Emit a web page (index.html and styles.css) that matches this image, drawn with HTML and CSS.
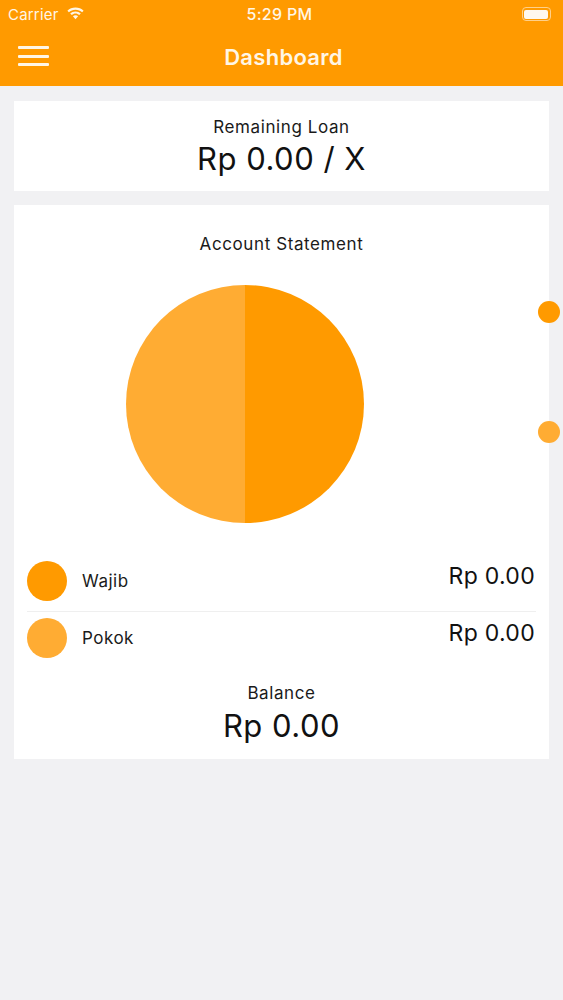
FILE: index.html
```html
<!DOCTYPE html>
<html lang="en">
<head>
<meta charset="utf-8">
<title>Dashboard</title>
<link rel="stylesheet" href="styles.css">
</head>
<body>
<header class="appbar">
  <div class="statusbar">
    <div class="sb-left">
      <span class="carrier">Carrier</span>
      <svg class="wifi" width="17" height="13" viewBox="0 0 17 13" aria-hidden="true">
        <path d="M8.5 0.5C5.3 0.5 2.5 1.7 0.4 3.7L1.9 5.3C3.6 3.7 5.9 2.7 8.5 2.7S13.4 3.7 15.1 5.3L16.6 3.7C14.5 1.7 11.7 0.5 8.5 0.5Z" fill="#fff6e6"/>
        <path d="M8.5 4.4C6.4 4.4 4.6 5.2 3.2 6.5L4.8 8.1C5.8 7.2 7.1 6.6 8.5 6.6S11.2 7.2 12.2 8.1L13.8 6.5C12.4 5.2 10.6 4.4 8.5 4.4Z" fill="#fff6e6"/>
        <path d="M8.5 8.3C7.5 8.3 6.6 8.7 5.9 9.3L8.5 12.2L11.1 9.3C10.4 8.7 9.5 8.3 8.5 8.3Z" fill="#fff6e6"/>
      </svg>
    </div>
    <span class="time">5:29 PM</span>
    <div class="sb-right">
      <span class="battery"><span class="battery-fill"></span></span>
    </div>
  </div>
  <nav class="navbar">
    <button class="menu" aria-label="Menu">
      <span></span><span></span><span></span>
    </button>
    <h1 class="title">Dashboard</h1>
    <span class="nav-spacer"></span>
  </nav>
</header>

<main class="content">
  <section class="card loan">
    <div class="label">Remaining Loan</div>
    <div class="big">Rp 0.00 / X</div>
  </section>

  <section class="card statement">
    <div class="label">Account Statement</div>
    <div class="chart">
      <svg class="pie" width="238" height="238" viewBox="0 0 238 238" aria-hidden="true">
        <path d="M119 0A119 119 0 0 1 119 238Z" fill="#ff9a00"/>
        <path d="M119 238A119 119 0 0 1 119 0Z" fill="#ffac33"/>
      </svg>
    </div>
    <span class="dot dot-a"></span>
    <span class="dot dot-b"></span>

    <ul class="legend">
      <li class="row">
        <span class="swatch wajib"></span>
        <span class="name">Wajib</span>
        <span class="amount">Rp 0.00</span>
      </li>
      <li class="row">
        <span class="swatch pokok"></span>
        <span class="name">Pokok</span>
        <span class="amount">Rp 0.00</span>
      </li>
    </ul>

    <div class="balance">
      <div class="label">Balance</div>
      <div class="big">Rp 0.00</div>
    </div>
  </section>
</main>
</body>
</html>
```
FILE: styles.css
```css
* { box-sizing: border-box; }

html, body {
  margin: 0;
  padding: 0;
}

body {
  width: 563px;
  min-height: 1000px;
  background: #f1f1f3;
  font-family: Inter, "Liberation Sans", sans-serif;
  color: #111;
}

.appbar {
  background: #ff9a00;
  color: #fff6e6;
}

.statusbar {
  height: 28px;
  display: flex;
  align-items: center;
  justify-content: space-between;
  padding: 0 12px 0 8px;
  font-size: 15px;
}

.sb-left {
  display: flex;
  align-items: center;
  gap: 8px;
  width: 100px;
}

.carrier { letter-spacing: 0.2px; }

.wifi { margin-top: -2px; }

.time {
  font-weight: 500;
  font-size: 16px;
  letter-spacing: 0.3px;
}

.sb-right {
  width: 100px;
  display: flex;
  justify-content: flex-end;
}

.battery {
  width: 29px;
  height: 14px;
  border: 1.5px solid #ffd08a;
  border-radius: 4px;
  padding: 1.5px;
  display: flex;
}

.battery-fill {
  flex: 1;
  background: #fff8ee;
  border-radius: 2px;
}

.navbar {
  height: 58px;
  display: flex;
  align-items: center;
  justify-content: space-between;
  padding: 0 14px 0 18px;
}

.menu {
  width: 31px;
  height: 20px;
  padding: 0;
  margin: 0 0 2px 0;
  border: 0;
  background: transparent;
  display: flex;
  flex-direction: column;
  justify-content: space-between;
}

.menu span {
  display: block;
  height: 3px;
  width: 100%;
  background: #fff6e6;
  border-radius: 1px;
}

.title {
  margin: 0 0 1px 0;
  font-size: 22px;
  font-weight: 600;
  letter-spacing: 0.3px;
  color: #fff6e6;
}

.nav-spacer { width: 31px; }

.content {
  padding: 15px 14px;
  display: flex;
  flex-direction: column;
  gap: 14px;
}

.card {
  background: #fff;
  text-align: center;
}

.label {
  font-size: 17px;
  line-height: 20px;
  letter-spacing: 0.6px;
  color: #1a1a1a;
}

.big {
  font-size: 31px;
  line-height: 36px;
  letter-spacing: 0.5px;
  color: #111;
}

.loan {
  padding: 16px 0 14px;
  display: flex;
  flex-direction: column;
  gap: 4px;
}

.statement {
  position: relative;
  padding: 29px 0 15px;
}

.chart {
  padding: 31px 0 0 112px;
  display: flex;
}

.pie { display: block; }

.dot {
  position: absolute;
  right: -11px;
  width: 22px;
  height: 22px;
  border-radius: 50%;
}

.dot-a { top: 96px; background: #ff9a00; }
.dot-b { top: 216px; background: #ffac33; }

.legend {
  list-style: none;
  margin: 32px 13px 0 13px;
  padding: 0;
  text-align: left;
}

.row {
  display: flex;
  align-items: center;
  padding: 6px 0 10px;
}

.row:first-child {
  border-bottom: 1px solid #efefef;
}

.swatch {
  width: 40px;
  height: 40px;
  border-radius: 50%;
  flex: none;
}

.wajib { background: #ff9a00; }
.pokok { background: #ffac33; }

.name {
  margin-left: 15px;
  font-size: 17px;
  letter-spacing: 0.5px;
  flex: 1;
  color: #1a1a1a;
}

.amount {
  align-self: flex-start;
  margin-top: 1px;
  margin-right: 1px;
  font-size: 23px;
  line-height: 28px;
  letter-spacing: 0.3px;
  color: #111;
}

.balance {
  padding-top: 15px;
  display: flex;
  flex-direction: column;
  gap: 5px;
}
```
